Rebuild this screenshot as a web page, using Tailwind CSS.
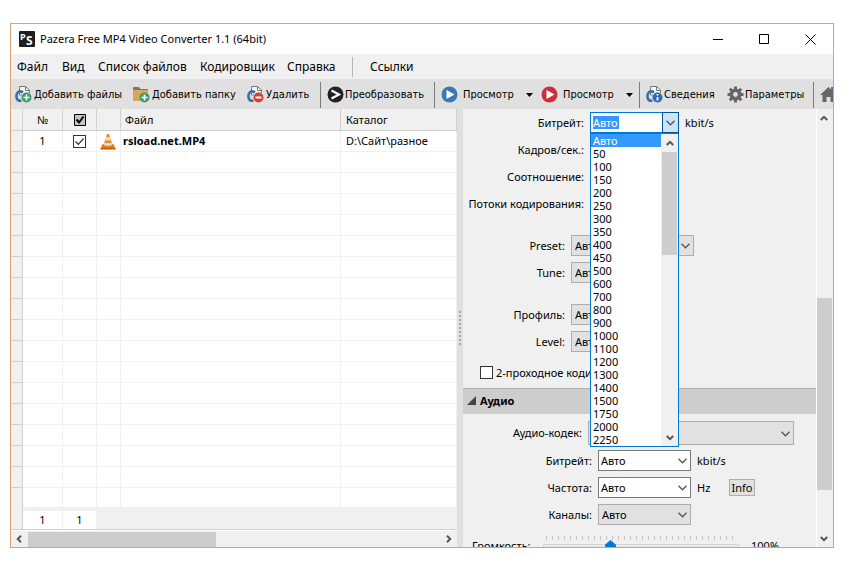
<!DOCTYPE html>
<html lang="ru">
<head>
  <meta charset="UTF-8" />
  <meta name="viewport" content="width=device-width, initial-scale=1" />
  <title>Pazera Free MP4 Video Converter 1.1 (64bit)</title>
  <script src="https://cdn.jsdelivr.net/npm/@tailwindcss/browser@4"></script>
</head>
<body class="h-screen bg-white pt-[23px] pr-[26px] pb-4 pl-[10px] font-['Noto_Sans','Open_Sans',sans-serif] text-[11px] leading-4 text-black">

  <!-- Icon shapes used more than once -->
  <svg class="hidden">
    <symbol id="down" viewBox="0 0 9 6"><path d="M.5 .8 4.5 4.8 8.5 .8" fill="none" stroke="#555" stroke-width="1.3" /></symbol>
    <symbol id="arrow" viewBox="0 0 8 6"><path d="M.8 1 4 4.2 7.2 1" fill="none" stroke="#555" stroke-width="2" /></symbol>
    <symbol id="file" viewBox="0 0 17 17">
      <path d="M4.500 4.500V.5h6l4 3.500v5h-10z" fill="#f6f6f6" stroke="#777" />
      <path d="M10.500 .5v4h4" fill="none" stroke="#777" />
      <path d="M8 6.300C4 4 1.400 6.500 1.400 10s2 5.500 5 4.500" fill="none" stroke="#3a6ea5" stroke-width="2.600" />
      <circle cx="11.500" cy="11.500" r="5.500" fill="#e0e0e0" />
    </symbol>
    <symbol id="play" viewBox="0 0 17 17"><circle cx="8.500" cy="8.500" r="8" fill="currentColor" /><path d="M5.500 4v9l8-4.500z" fill="#fff" /></symbol>
    <symbol id="cone" viewBox="0 0 16 17">
      <path d="M2.500 11h11l2 5H.5z" fill="#e8780c" />
      <path d="M.5 15h15v1.500H.5z" fill="#b9560c" />
      <path d="M7 1h2l3.800 11.500q-4.800 2.500-9.600 0z" fill="#ec8a2a" />
      <path d="M6 4h4l1 3q-3 1-6 0zM4.200 9.500q3.800 1.500 7.600 0l.7 2.300q-4.500 2-9 0z" fill="#ddd" />
    </symbol>
  </svg>

  <div class="flex h-full flex-col overflow-hidden border border-[#d5a27e] bg-[#f0f0f0]">

    <!-- Title bar -->
    <header class="flex h-[30px] shrink-0 items-center bg-white pr-[17px] pl-2">
      <svg class="mr-[5px] size-4" viewBox="0 0 16 16"><rect width="16" height="16" rx="1" fill="#1e1e1e" /><text x="1" y="9" font-size="9" font-weight="700" fill="#fff">P</text><text x="7" y="14" font-size="12" font-weight="700" fill="#fff">S</text></svg>
      <h1 class="flex-1">Pazera Free MP4 Video Converter 1.1 (64bit)</h1>
      <div class="flex gap-[35px]">
        <button aria-label="Свернуть"><svg class="h-[11px] w-[11px]" viewBox="0 0 11 11"><path d="M0 5.500h10" stroke="#000" /></svg></button>
        <button aria-label="Развернуть"><svg class="h-[11px] w-[11px]" viewBox="0 0 11 11"><path d="M.5 .5h9v9h-9z" fill="none" stroke="#000" /></svg></button>
        <button aria-label="Закрыть"><svg class="h-[11px] w-[11px]" viewBox="0 0 11 11"><path d="M.5 .5l10 10M10.500 .5l-10 10" stroke="#000" /></svg></button>
      </div>
    </header>

    <!-- Menu -->
    <nav class="flex h-[25px] shrink-0 items-center whitespace-nowrap pl-1.5 text-[12px]">
      <button class="w-[45px] text-left">Файл</button>
      <button class="w-9 text-left">Вид</button>
      <button class="w-[102px] text-left">Список файлов</button>
      <button class="w-[87px] text-left">Кодировщик</button>
      <button class="w-[65px] text-left">Справка</button>
      <span class="mr-[17px] h-5 w-px bg-[#b5b5b5]"></span>
      <button>Ссылки</button>
    </nav>

    <!-- Toolbar -->
    <div class="flex h-[30px] shrink-0 items-center overflow-hidden whitespace-nowrap bg-[#e0e0e0] pt-px pl-1 font-['DejaVu_Sans_Condensed','DejaVu_Sans',sans-serif] *:shrink-0">
      <button class="flex w-[118px] items-center gap-0.5">
        <svg class="size-[17px]" viewBox="0 0 17 17"><use href="#file" /><circle cx="11.500" cy="11.500" r="5" fill="#3a9c71" /><path d="M11.500 8.500v6M8.500 11.500h6" stroke="#fff" stroke-width="1.600" /></svg>
        Добавить файлы
      </button>
      <button class="flex w-[114px] items-center gap-0.5">
        <svg class="size-[17px]" viewBox="0 0 17 17"><path d="M0 1h6l1.500 2H15v2H0z" fill="#777" /><path d="M0 4h15v11H0z" fill="#dba65c" /><circle cx="11.500" cy="11.500" r="5" fill="#3a9c71" /><path d="M11.500 8.500v6M8.500 11.500h6" stroke="#fff" stroke-width="1.600" /></svg>
        Добавить папку
      </button>
      <button class="flex w-[73px] items-center gap-0.5">
        <svg class="size-[17px]" viewBox="0 0 17 17"><use href="#file" /><circle cx="11.500" cy="11.500" r="5" fill="#cf3f33" /><path d="M8.500 11.500h6" stroke="#fff" stroke-width="2" /></svg>
        Удалить
      </button>
      <span class="mr-1.5 h-[26px] w-px bg-[#7b7b7b]"></span>
      <button class="flex w-[107px] items-center gap-px">
        <svg class="size-[17px]" viewBox="0 0 17 17"><circle cx="8.500" cy="8.500" r="8" fill="#222" /><path d="M4.500 4.500 12 8.500l-7.500 4" fill="none" stroke="#fff" stroke-width="2.200" /></svg>
        Преобразовать
      </button>
      <span class="mr-1.5 h-[26px] w-px bg-[#7b7b7b]"></span>
      <button class="flex w-[85px] items-center gap-[5px]"><svg class="size-[17px] text-[#3c78b4]"><use href="#play" /></svg>Просмотр</button>
      <button class="w-[15px]" aria-label="Ещё"><svg class="h-1 w-[7px]" viewBox="0 0 7 4"><path d="M0 0h7L3.500 4z" /></svg></button>
      <button class="flex w-[85px] items-center gap-[5px]"><svg class="size-[17px] text-[#c9303c]"><use href="#play" /></svg>Просмотр</button>
      <button class="w-[13px]" aria-label="Ещё"><svg class="h-1 w-[7px]" viewBox="0 0 7 4"><path d="M0 0h7L3.500 4z" /></svg></button>
      <span class="mr-1.5 h-[26px] w-px bg-[#7b7b7b]"></span>
      <button class="flex w-[81px] items-center gap-px">
        <svg class="size-[17px]" viewBox="0 0 17 17"><use href="#file" /><circle cx="11.500" cy="11.500" r="5" fill="#2f6cae" /><path d="M11.500 11v3.500M11.500 8v1.600" stroke="#fff" stroke-width="1.800" /></svg>
        Сведения
      </button>
      <button class="flex w-[86px] items-center gap-px">
        <svg class="size-[17px]" viewBox="0 0 17 17"><circle cx="8.500" cy="8.500" r="4.200" fill="none" stroke="#666" stroke-width="3.600" /><path d="M8.500 .5v4M8.500 12.500v4M.5 8.500h4M12.500 8.500h4M2.800 2.800l3 3M11.200 11.200l3 3M14.200 2.800l-3 3M5.800 11.200l-3 3" stroke="#666" stroke-width="3" /></svg>
        Параметры
      </button>
      <span class="mr-1.5 h-[26px] w-px bg-[#7b7b7b]"></span>
      <button aria-label="Домой"><svg class="size-[17px]" viewBox="0 0 17 17"><path d="M11 1h4v5h-4z" fill="#3c78b4" /><path d="M8.500 1 0 9h2.500v7h4v-5h4v5h4V9H17z" fill="#666" /></svg></button>
    </div>

    <main class="flex min-h-0 flex-1">

      <!-- File list -->
      <section class="flex min-w-0 flex-1 flex-col">
        <div class="min-h-0 flex-1 overflow-hidden bg-white">
          <table class="w-full table-fixed border-separate border-spacing-0 text-left">
            <colgroup><col class="w-3" /><col class="w-10" /><col class="w-[34px]" /><col class="w-6" /><col class="w-[220px]" /><col /></colgroup>
            <thead class="bg-[#f0f0f0]">
              <tr class="h-[22px] *:border-r *:border-b *:border-[#d0d0d0] *:p-0 *:font-normal">
                <th></th>
                <th class="text-center">№</th>
                <th><svg class="mx-auto size-3" viewBox="0 0 12 12"><path d="M.5 .5h11v11H.5z" fill="#c4c4c4" stroke="#000" /><path d="M2.500 5.500 5 8.500l4.500-6" fill="none" stroke="#000" stroke-width="2" /></svg></th>
                <th></th>
                <th><span class="pl-1">Файл</span></th>
                <th class="border-r-0"><span class="pl-[5px]">Каталог</span></th>
              </tr>
            </thead>
            <tbody id="files"></tbody>
          </table>
        </div>
        <div class="flex h-[23px] shrink-0 border-b border-[#d0d0d0] text-center leading-[18px]">
          <span class="w-3 border-r border-[#d0d0d0]"></span>
          <span class="mt-1 w-10 border-r border-[#f0f0f0] bg-white">1</span>
          <span class="mt-1 w-[34px] border-r border-[#f0f0f0] bg-white">1</span>
        </div>
        <div class="flex h-[17px] shrink-0 items-center border-t border-white">
          <svg class="mr-[5px] ml-1 h-1.5 w-2 rotate-90"><use href="#arrow" /></svg>
          <span class="h-[15px] w-[188px] bg-[#cdcdcd]"></span>
          <svg class="mr-1 ml-auto h-1.5 w-2 -rotate-90"><use href="#arrow" /></svg>
        </div>
      </section>

      <div class="flex w-1.5 shrink-0 items-center justify-center bg-[#e0e0e0]">
        <span class="h-[34px] w-0.5 bg-[repeating-linear-gradient(#a5a5a5_0_2px,transparent_2px_4px)]"></span>
      </div>

      <!-- Encoder settings -->
      <section class="w-[353px] shrink-0 overflow-hidden whitespace-nowrap">
        <div class="flex h-[27px] items-center gap-1.5">
          <label for="vbitrate" class="w-[121px] text-right">Битрейт:</label>
          <div class="relative flex h-[21px] w-[89px] border border-[#0078d7] bg-white">
            <input id="vbitrate" value="Авто" class="my-[3px] ml-0.5 w-[26px] bg-[#3399ff] text-white outline-none" />
            <button class="-my-px -mr-px ml-auto flex w-[17px] items-center justify-center border border-[#005499] bg-[#cce4f7]" aria-label="Открыть список"><svg class="h-1.5 w-[9px]"><use href="#down" /></svg></button>
            <div class="absolute top-5 -left-px z-10 flex w-[89px] border border-[#0078d7] bg-white">
              <ul id="rates" role="listbox" class="flex-1 leading-[13px]"></ul>
              <div class="flex w-[17px] flex-col items-center bg-[#f0f0f0]">
                <svg class="my-[6px] h-1.5 w-2 rotate-180"><use href="#arrow" /></svg>
                <span class="h-[103px] w-[15px] bg-[#cdcdcd]"></span>
                <svg class="mt-auto mb-[5px] h-1.5 w-2"><use href="#arrow" /></svg>
              </div>
            </div>
          </div>
          <span>kbit/s</span>
        </div>
        <div class="flex h-[27px] items-center gap-1.5">
          <label for="fps" class="w-[121px] text-right">Кадров/сек.:</label>
          <select id="fps" class="h-[21px] w-[88px] appearance-none border border-[#adadad] bg-[#e1e1e1] px-[3px]"><option>Авто</option></select>
        </div>
        <div class="flex h-[27px] items-center gap-1.5">
          <label for="aspect" class="w-[121px] text-right">Соотношение:</label>
          <select id="aspect" class="h-[21px] w-[88px] appearance-none border border-[#adadad] bg-[#e1e1e1] px-[3px]"><option>Авто</option></select>
        </div>
        <div class="flex h-[27px] items-center gap-1.5">
          <label for="threads" class="w-[121px] text-right">Потоки кодирования:</label>
          <select id="threads" class="h-[21px] w-[88px] appearance-none border border-[#adadad] bg-[#e1e1e1] px-[3px]"><option>Авто</option></select>
        </div>

        <div class="mt-[15px] flex h-[27px] items-center gap-1.5">
          <label for="preset" class="w-[102px] text-right">Preset:</label>
          <div class="relative">
            <select id="preset" class="block h-[21px] w-[123px] appearance-none border border-[#adadad] bg-[#e1e1e1] px-[3px]"><option>Авто</option></select>
            <svg class="pointer-events-none absolute top-2 right-1 h-1.5 w-[9px]"><use href="#down" /></svg>
          </div>
        </div>
        <div class="flex h-[27px] items-center gap-1.5">
          <label for="tune" class="w-[102px] text-right">Tune:</label>
          <select id="tune" class="h-[21px] w-[100px] appearance-none border border-[#adadad] bg-[#e1e1e1] px-[3px]"><option>Авто</option></select>
        </div>
        <div class="mt-[15px] flex h-[27px] items-center gap-1.5">
          <label for="profile" class="w-[102px] text-right">Профиль:</label>
          <select id="profile" class="h-[21px] w-[100px] appearance-none border border-[#adadad] bg-[#e1e1e1] px-[3px]"><option>Авто</option></select>
        </div>
        <div class="flex h-[27px] items-center gap-1.5">
          <label for="level" class="w-[102px] text-right">Level:</label>
          <select id="level" class="h-[21px] w-[100px] appearance-none border border-[#adadad] bg-[#e1e1e1] px-[3px]"><option>Авто</option></select>
        </div>
        <label class="flex h-[33px] items-center gap-[3px] pt-0.5 pl-[17px]">
          <input type="checkbox" class="size-[13px] appearance-none border border-[#333] bg-white" />
          2-проходное кодирование
        </label>

        <h2 class="flex h-[26px] items-center gap-1 border-t border-[#adadad] bg-[#cdcdcd] pb-0.5 pl-1 font-bold">
          <svg class="size-[9px]" viewBox="0 0 9 9"><path d="M9 0v9H0z" fill="#444" /></svg>
          Аудио
        </h2>
        <div class="mt-1 flex h-[29px] items-center gap-1.5">
          <label for="acodec" class="w-[119px] text-right">Аудио-кодек:</label>
          <div class="relative">
            <select id="acodec" class="block h-6 w-[206px] appearance-none border border-[#adadad] bg-[#e1e1e1] px-[3px]"><option>AAC</option></select>
            <svg class="pointer-events-none absolute top-[10px] right-1 h-1.5 w-[9px]"><use href="#down" /></svg>
          </div>
        </div>
        <div class="flex h-[27px] items-center gap-1.5">
          <label for="abitrate" class="w-[129px] text-right">Битрейт:</label>
          <div class="flex h-[21px] w-[93px] items-center border border-[#7a7a7a] bg-white pr-[3px] pl-0.5">
            <input id="abitrate" value="Авто" class="min-w-0 flex-1 outline-none" />
            <button class="flex" aria-label="Открыть список"><svg class="h-1.5 w-[9px]"><use href="#down" /></svg></button>
          </div>
          <span>kbit/s</span>
        </div>
        <div class="flex h-[27px] items-center gap-1.5">
          <label for="rate" class="w-[129px] text-right">Частота:</label>
          <div class="flex h-[21px] w-[93px] items-center border border-[#7a7a7a] bg-white pr-[3px] pl-0.5">
            <input id="rate" value="Авто" class="min-w-0 flex-1 outline-none" />
            <button class="flex" aria-label="Открыть список"><svg class="h-1.5 w-[9px]"><use href="#down" /></svg></button>
          </div>
          <span class="w-[26px]">Hz</span>
          <button class="h-[17px] w-[26px] border border-[#adadad] bg-[#e1e1e1] leading-[15px]">Info</button>
        </div>
        <div class="flex h-[27px] items-center gap-1.5">
          <label for="channels" class="w-[129px] text-right">Каналы:</label>
          <div class="relative">
            <select id="channels" class="block h-[21px] w-[93px] appearance-none border border-[#adadad] bg-[#e1e1e1] px-[3px]"><option>Авто</option></select>
            <svg class="pointer-events-none absolute top-2 right-1 h-1.5 w-[9px]"><use href="#down" /></svg>
          </div>
        </div>
        <div class="flex items-start pt-2 pl-[9px]">
          <label for="volume" class="w-[71px] pt-0.5">Громкость:</label>
          <div class="w-[196px]">
            <div class="mx-[3px] h-1 w-[187px] bg-[repeating-linear-gradient(90deg,#c4c4c4_0_1px,transparent_1px_6px)]"></div>
            <input id="volume" type="range" min="0" max="300" value="100" class="mt-1 block h-1 w-full appearance-none border border-[#d6d6d6] bg-[#e7eaea] [&::-webkit-slider-thumb]:h-3 [&::-webkit-slider-thumb]:w-[11px] [&::-webkit-slider-thumb]:appearance-none [&::-webkit-slider-thumb]:bg-[#0078d7] [&::-webkit-slider-thumb]:[clip-path:polygon(50%_0,100%_40%,100%_100%,0_100%,0_40%)]" />
          </div>
          <output for="volume" class="pt-0.5 pl-3">100%</output>
        </div>
      </section>

      <div class="flex w-[17px] shrink-0 flex-col border-l border-white">
        <svg class="mt-1.5 ml-[3px] h-1.5 w-2 shrink-0 rotate-180"><use href="#arrow" /></svg>
        <span class="mt-[177px] h-48 w-[15px] shrink-0 bg-[#cdcdcd]"></span>
        <svg class="mt-auto mb-[5px] ml-[3px] h-1.5 w-2 shrink-0"><use href="#arrow" /></svg>
      </div>
    </main>
  </div>

  <script>
    const files = [{ name: "rsload.net.MP4", dir: "D:\\Сайт\\разное" }];
    const rates = ["Авто", 50, 100, 150, 200, 250, 300, 350, 400, 450, 500, 600, 700, 800, 900,
      1000, 1100, 1200, 1300, 1400, 1500, 1750, 2000, 2250];

    // Tick box with its own mark
    const tick = `
      <span class="mx-auto grid size-[13px]">
        <input type="checkbox" checked aria-label="Выбрать" class="peer col-start-1 row-start-1 size-[13px] appearance-none border border-[#333] bg-white" />
        <svg class="pointer-events-none invisible col-start-1 row-start-1 size-[13px] peer-checked:visible" viewBox="0 0 13 13"><path d="M2.500 6.500 5.300 9.300 10.500 3.500" fill="none" stroke="#333" stroke-width="1.200" /></svg>
      </span>`;

    // The list is always filled up with empty rows
    const body = document.getElementById("files");
    for (let i = 0; i < 18; i++) {
      const f = files[i];
      const row = document.createElement("tr");
      row.className = "h-[21px] *:border-r *:border-b *:border-[#f0f0f0] *:p-0";
      row.innerHTML = `
        <td class="border-[#d0d0d0]! bg-[#f0f0f0]"></td>
        <td class="text-center">${f ? i + 1 : ""}</td>
        <td>${f ? tick : ""}</td>
        <td>${f ? '<svg class="h-[17px] w-4 ml-[3px]"><use href="#cone" /></svg>' : ""}</td>
        <td class="font-bold">${f ? `<span class="pl-0.5">${f.name}</span>` : ""}</td>
        <td class="border-r-0">${f ? `<span class="pl-[5px]">${f.dir}</span>` : ""}</td>`;
      body.appendChild(row);
    }

    const list = document.getElementById("rates");
    rates.forEach((rate, i) => {
      const item = document.createElement("li");
      item.setAttribute("role", "option");
      item.className = i === 0 ? "h-[13px] bg-[#3399ff] pl-0.5 text-white" : "h-[13px] pl-0.5";
      item.textContent = rate;
      list.appendChild(item);
    });
  </script>
</body>
</html>
